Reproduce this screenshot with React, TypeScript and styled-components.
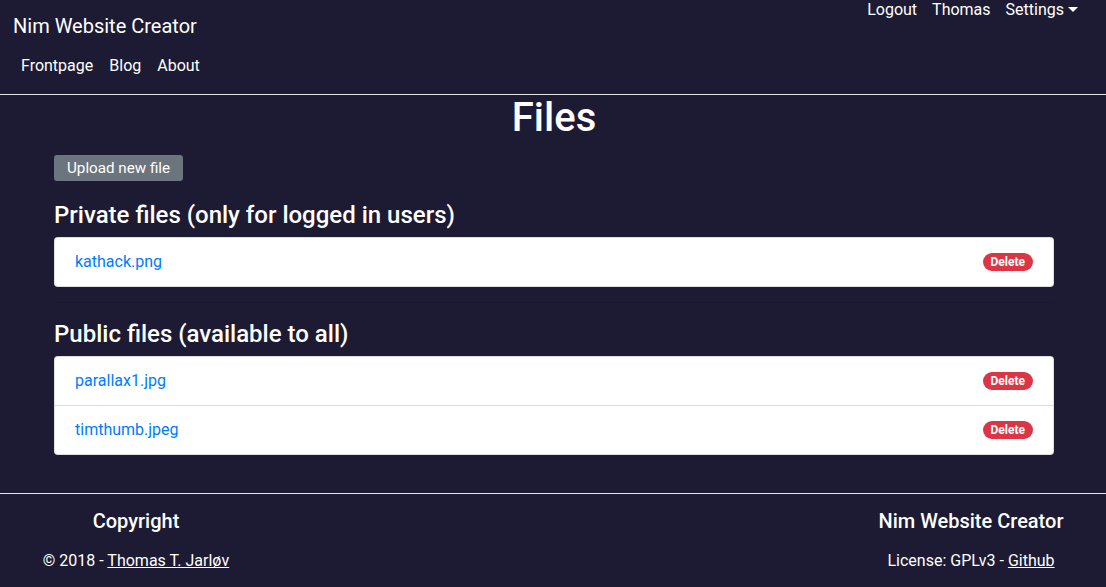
import React from "react";
import styled, { createGlobalStyle } from "styled-components";

const Global = createGlobalStyle`
  html, body { margin: 0; padding: 0; }
  body {
    background: #1d1b33;
    color: #ffffff;
    font-family: Roboto, "Liberation Sans", Arial, sans-serif;
    font-size: 16px;
    line-height: 1.5;
  }
`;

const Page = styled.div`
  min-height: 587px;
  display: flex;
  flex-direction: column;
`;

const Header = styled.header`
  height: 94px;
  border-bottom: 1px solid #e6e6e6;
  display: flex;
  justify-content: space-between;
  box-sizing: content-box;
`;

const Brand = styled.div`
  display: flex;
  flex-direction: column;
  padding-left: 13px;
`;

const Title = styled.a`
  font-size: 20px;
  line-height: 30px;
  margin-top: 11px;
  color: #fff;
  text-decoration: none;
`;

const MainNav = styled.nav`
  display: flex;
  gap: 16px;
  margin-top: 13px;
  padding-left: 8px;
`;

const NavLink = styled.a`
  color: #fff;
  text-decoration: none;
  font-size: 16px;
  line-height: 24px;
`;

const UserNav = styled.nav`
  display: flex;
  gap: 15px;
  padding-right: 28px;
  margin-top: -2px;
  height: 24px;
`;

const Caret = styled.span`
  display: inline-block;
  margin-left: 4px;
  vertical-align: 3px;
  border-top: 5px solid #fff;
  border-left: 5px solid transparent;
  border-right: 5px solid transparent;
`;

const Main = styled.main`
  width: 1000px;
  margin: 0 0 0 54px;
  padding-bottom: 38px;
`;

const PageTitle = styled.h1`
  margin: 0;
  text-align: center;
  font-size: 40px;
  font-weight: 500;
  line-height: 46px;
`;

const UploadButton = styled.button`
  margin-top: 14px;
  height: 26px;
  padding: 0 13px;
  background: #6c757d;
  border: none;
  border-radius: 3px;
  color: #fff;
  font-family: inherit;
  font-size: 15.2px;
  line-height: 26px;
  cursor: pointer;
`;

const SectionTitle = styled.h3`
  margin: 0;
  font-size: 24px;
  font-weight: 500;
  line-height: 28px;
  margin-top: ${(p: { $top: number }) => p.$top}px;
  margin-bottom: 8px;
`;

const List = styled.ul`
  list-style: none;
  margin: 0;
  padding: 0;
  background: #fff;
  border: 1px solid rgba(0, 0, 0, 0.125);
  border-radius: 4px;
  overflow: hidden;
`;

const Item = styled.li`
  height: 48px;
  display: flex;
  align-items: center;
  justify-content: space-between;
  padding: 0 20px 0 20px;
  border-top: 1px solid #dcdcdc;
  &:first-child { border-top: none; }
`;

const FileLink = styled.a`
  color: #007bff;
  text-decoration: none;
  font-size: 16px;
`;

const Badge = styled.span`
  background: #dc3545;
  color: #fff;
  font-size: 12px;
  font-weight: 700;
  line-height: 12px;
  padding: 3px 8px 3px;
  border-radius: 10px;
`;

const Rule = styled.hr`
  margin: 15px 0 0;
  border: none;
  border-top: 1px solid rgba(0, 0, 0, 0.1);
`;

const Footer = styled.footer`
  border-top: 1px solid #e6e6e6;
  display: flex;
  justify-content: space-between;
  padding: 13px 20px 0 21px;
`;

const FooterCol = styled.div`
  width: 230px;
  text-align: center;
`;

const FooterTitle = styled.h5`
  margin: 0;
  font-size: 20px;
  font-weight: 500;
  line-height: 28px;
`;

const FooterText = styled.p`
  margin: 14px 0 0;
  font-size: 16px;
  line-height: 24px;
`;

const FooterLink = styled.a`
  color: #fff;
  text-decoration: underline;
`;

const privateFiles = ["kathack.png"];
const publicFiles = ["parallax1.jpg", "timthumb.jpeg"];

export default function App() {
  return (
    <Page>
      <Global />
      <Header>
        <Brand>
          <Title href="#">Nim Website Creator</Title>
          <MainNav>
            <NavLink href="#">Frontpage</NavLink>
            <NavLink href="#">Blog</NavLink>
            <NavLink href="#">About</NavLink>
          </MainNav>
        </Brand>
        <UserNav>
          <NavLink href="#">Logout</NavLink>
          <NavLink href="#">Thomas</NavLink>
          <NavLink href="#">
            Settings<Caret />
          </NavLink>
        </UserNav>
      </Header>
      <Main>
        <PageTitle>Files</PageTitle>
        <UploadButton>Upload new file</UploadButton>
        <SectionTitle $top={20}>Private files (only for logged in users)</SectionTitle>
        <List>
          {privateFiles.map((f) => (
            <Item key={f}>
              <FileLink href="#">{f}</FileLink>
              <Badge>Delete</Badge>
            </Item>
          ))}
        </List>
        <Rule />
        <SectionTitle $top={17}>Public files (available to all)</SectionTitle>
        <List>
          {publicFiles.map((f) => (
            <Item key={f}>
              <FileLink href="#">{f}</FileLink>
              <Badge>Delete</Badge>
            </Item>
          ))}
        </List>
      </Main>
      <Footer>
        <FooterCol>
          <FooterTitle>Copyright</FooterTitle>
          <FooterText>
            © 2018 - <FooterLink href="#">Thomas T. Jarløv</FooterLink>
          </FooterText>
        </FooterCol>
        <FooterCol>
          <FooterTitle>Nim Website Creator</FooterTitle>
          <FooterText>
            License: GPLv3 - <FooterLink href="#">Github</FooterLink>
          </FooterText>
        </FooterCol>
      </Footer>
    </Page>
  );
}
